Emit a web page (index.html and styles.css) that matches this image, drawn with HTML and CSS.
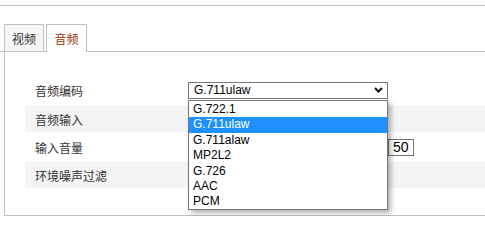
FILE: index.html
```html
<!DOCTYPE html>
<html lang="zh">
<head>
    <meta charset="UTF-8">
    <title>音频设置</title>
    <link rel="stylesheet" href="styles.css">
</head>
<body>
    <div class="page">
        <ul class="tabs">
            <li class="tab">视频</li>
            <li class="tab active">音频</li>
        </ul>
        <div class="panel">
            <div class="row first">
                <div class="label">音频编码</div>
                <div class="value">
                    <span class="select-wrap">
                        <select class="select" id="codec">
                            <option>G.722.1</option>
                            <option selected>G.711ulaw</option>
                            <option>G.711alaw</option>
                            <option>MP2L2</option>
                            <option>G.726</option>
                            <option>AAC</option>
                            <option>PCM</option>
                        </select>
                        <svg class="chevron" width="9" height="6" viewBox="0 0 9 6">
                            <path d="M1 1 L4.5 4.5 L8 1" fill="none" stroke="#111" stroke-width="2"/>
                        </svg>
                    </span>
                    <div class="dropdown">
                        <div class="opt">G.722.1</div>
                        <div class="opt selected">G.711ulaw</div>
                        <div class="opt">G.711alaw</div>
                        <div class="opt">MP2L2</div>
                        <div class="opt">G.726</div>
                        <div class="opt">AAC</div>
                        <div class="opt">PCM</div>
                    </div>
                </div>
            </div>
            <div class="row gray">
                <div class="label">音频输入</div>
                <div class="value"></div>
            </div>
            <div class="row tall">
                <div class="label">输入音量</div>
                <div class="value">
                    <div class="slider"></div>
                    <input class="num" type="text" value="50">
                </div>
            </div>
            <div class="row gray">
                <div class="label">环境噪声过滤</div>
                <div class="value"></div>
            </div>
        </div>
    </div>
</body>
</html>
```

FILE: styles.css
```css
body {
    margin: 0;
    padding: 0;
    background: #ffffff;
    font-family: "Liberation Sans", "Noto Sans CJK SC", sans-serif;
    font-size: 12px;
    color: #333333;
}
.page {
    margin-top: 5px;
    border-top: 1px solid #c0c0c0;
    padding-top: 18px;
}
.tabs {
    list-style: none;
    margin: 0;
    padding: 0 0 0 4px;
    display: flex;
    gap: 2px;
    border-bottom: 1px solid #c0c0c0;
    height: 27px;
}
.tab {
    box-sizing: border-box;
    width: 40px;
    height: 27px;
    border: 1px solid #c0c0c0;
    border-bottom: none;
    background: #f5f5f5;
    text-align: center;
    line-height: 27px;
    font-family: "Noto Sans CJK SC", sans-serif;
    font-size: 12px;
    color: #333333;
}
.tab.active {
    width: 41px;
    height: 28px;
    background: #ffffff;
    color: #9c3500;
}
.panel {
    margin-left: 4px;
    border-left: 1px solid #c0c0c0;
    border-bottom: 1px solid #c0c0c0;
    padding: 28px 0 27px 20px;
}
.row {
    display: flex;
    align-items: center;
    height: 26px;
}
.row.first {
    align-items: flex-start;
    padding-top: 2px;
    height: 24px;
}
.row.tall {
    height: 30px;
}
.row.gray {
    background: #f4f4f4;
}
.label {
    width: 153px;
    padding-left: 10px;
    line-height: 17px;
    font-family: "Noto Sans CJK SC", sans-serif;
    font-size: 12px;
    color: #333333;
}
.value {
    position: relative;
    display: flex;
    align-items: center;
}
.select-wrap {
    position: relative;
    display: block;
    width: 200px;
    height: 17px;
}
.select {
    appearance: none;
    -webkit-appearance: none;
    box-sizing: border-box;
    width: 200px;
    height: 17px;
    margin: 0;
    padding: 0 0 0 5px;
    border: 1px solid #767676;
    border-radius: 0;
    background: #ffffff;
    font-family: "Liberation Sans", sans-serif;
    font-size: 12px;
    line-height: 15px;
    color: #000000;
}
.chevron {
    position: absolute;
    right: 5px;
    top: 5px;
}
.dropdown {
    position: absolute;
    left: 0;
    top: 18px;
    z-index: 2;
    box-sizing: border-box;
    width: 200px;
    height: 110px;
    padding: 1px 0 0;
    border: 1px solid #767676;
    background: #ffffff;
    box-shadow: 3px 3px 5px rgba(0, 0, 0, 0.3);
}
.opt {
    height: 15.4px;
    line-height: 15.4px;
    padding-left: 4px;
    font-family: "Liberation Sans", sans-serif;
    font-size: 12px;
    color: #000000;
}
.opt.selected {
    background: #1e90ff;
    color: #ffffff;
}
.slider {
    width: 200px;
    height: 17px;
}
.num {
    box-sizing: border-box;
    width: 26px;
    height: 17px;
    margin: 0;
    padding: 0 0 0 4px;
    border: 1px solid #767676;
    font-family: "Liberation Sans", sans-serif;
    font-size: 14px;
    color: #000000;
}
```
